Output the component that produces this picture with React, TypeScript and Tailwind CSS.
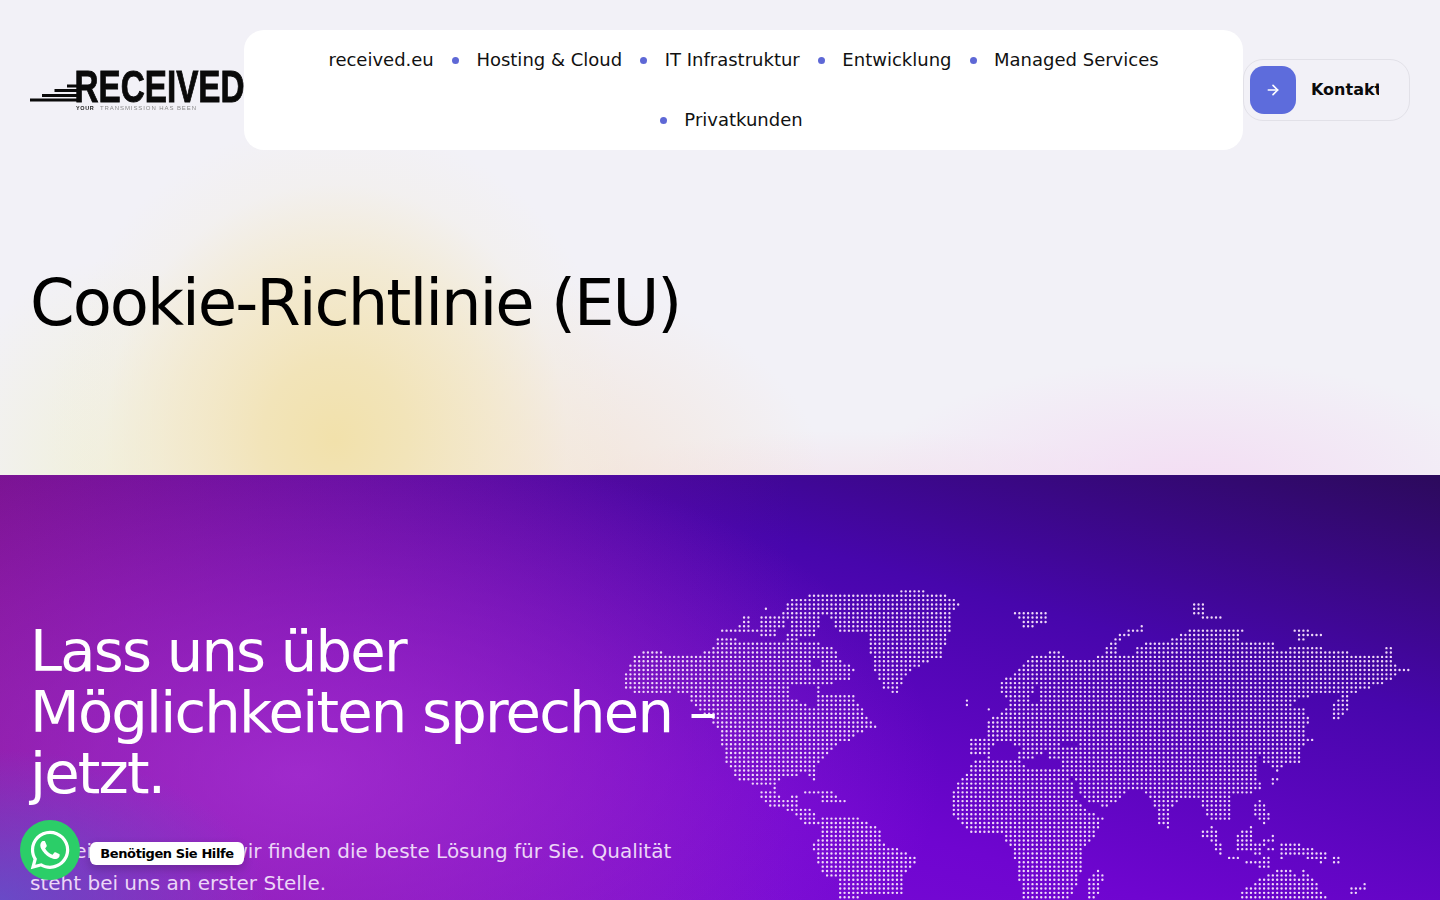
import { ArrowRight } from "lucide-react";
import { FaWhatsapp } from "react-icons/fa";

type Pt = [number, number];
const z4 = (p: number[]): Pt[] => { const o: Pt[] = []; for (let i = 0; i < p.length; i += 2) o.push([610 + p[i] / 3, 580 + p[i + 1] / 3]); return o; };
const z5 = (p: number[]): Pt[] => { const o: Pt[] = []; for (let i = 0; i < p.length; i += 2) o.push([950 + p[i] / 3, 590 + p[i + 1] / 3]); return o; };

const land: Pt[][] = [
  z4([42,285,70,228,110,212,220,226,295,215,320,178,380,172,400,188,520,188,530,172,610,188,670,200,695,240,735,268,718,305,640,312,622,345,730,345,772,410,800,445,742,458,718,482,680,495,650,522,618,560,614,614,595,582,512,590,500,625,462,622,385,598,345,545,330,460,305,420,240,365,240,340,190,335,130,340,110,350,42,325]),
  z4([450,628,500,630,515,660,560,645,565,680,605,690,632,732,585,732,550,695,480,680,450,655]),
  z4([580,632,670,632,680,650,710,665,640,668,625,645,582,642]),
  z4([635,712,738,712,815,750,815,788,915,830,915,850,885,880,880,945,690,955,682,890,640,885,606,800,632,770]),
  z4([610,42,720,42,840,42,895,28,1005,42,1062,70,1022,100,1022,140,998,232,930,255,885,295,865,340,818,328,790,270,778,190,772,165,680,155,660,112,640,100]),
  z4([515,100,540,58,610,42,640,100,620,168,530,168,540,130]),
  z4([398,108,420,108,420,130,398,130]),
  z4([450,108,525,108,525,142,450,142]),
  z4([335,148,400,136,500,150,498,168,335,158]),
  z4([464,84,470,84,470,90,464,90]),
  z5([150,278,205,240,245,197,330,182,345,205,415,212,445,197,555,197,560,172,590,155,650,158,690,133,730,118,882,118,870,155,975,158,982,183,1040,170,1105,172,1170,183,1240,197,1320,197,1345,228,1382,238,1340,256,1300,282,1222,308,1170,310,1040,322,1030,345,1065,355,1080,400,1060,430,1092,448,1060,470,1052,518,1000,530,990,548,950,525,930,500,915,520,935,600,890,612,842,612,848,690,790,700,770,680,740,622,690,622,665,660,660,716,625,700,610,630,570,592,525,605,500,632,470,650,412,640,385,612,370,560,340,540,335,510,295,505,295,480,250,505,205,505,210,470,185,465,180,455,130,465,125,505,60,495,58,448,112,445,112,392,150,368,180,352,168,320,150,300]),
  z5([8,610,32,562,60,535,70,508,200,508,240,538,350,538,382,625,415,665,462,682,435,735,395,775,398,830,360,935,215,935,205,840,178,765,150,728,120,728,60,728,20,690,8,670]),
  z5([190,65,300,58,295,100,238,112,218,112,205,85]),
  z5([730,42,765,38,770,70,818,78,818,88,760,88,730,72]),
  z5([468,165,520,125,578,103,578,122,515,142,500,192,470,192]),
  z5([1033,118,1060,118,1118,130,1118,138,1065,138,1060,155,1040,155]),
  z5([1308,170,1330,170,1330,192,1308,192]),
  z5([1150,345,1175,318,1198,318,1198,362,1172,388,1148,388]),
  z5([965,562,988,562,978,585,966,585]),
  z5([415,870,445,838,462,855,438,928,415,928]),
  z5([912,645,932,628,962,672,948,718,938,695,915,672]),
  z5([755,725,792,708,818,770,818,795,800,785,780,750,755,745]),
  z5([850,745,880,722,905,708,912,778,855,780]),
  z5([915,762,945,748,972,735,972,752,940,770,938,795,915,795]),
  z5([825,798,868,798,868,808,825,808]),
  z5([885,815,960,798,962,832,925,832]),
  z5([955,772,975,772,975,782,955,782]),
  z5([990,762,1040,762,1132,788,1118,832,1098,815,1040,792,1012,790,1005,808,990,808]),
  z5([1148,798,1172,798,1172,822,1148,822]),
  z5([872,905,930,865,990,835,1028,838,1040,870,1060,842,1085,860,1135,928,872,935]),
  z5([1200,895,1250,878,1250,897,1215,915,1200,915]),
  z5([47,328,54,328,54,350,47,350]),
  z5([113,352,120,352,120,362,113,362]),
];
const holes: Pt[][] = [
  z4([535,312,620,312,622,345,625,385,580,370,545,350]),
  z4([600,232,630,232,630,258,600,258]),
  z5([250,292,266,285,268,335,245,335]),
  z5([370,575,385,575,395,630,380,630]),
  z5([150,465,185,465,190,500,150,500]),
  z5([332,452,392,450,388,470,340,470]),
];
function inside(p: Pt, poly: Pt[]) {
  let c = false;
  for (let i = 0, j = poly.length - 1; i < poly.length; j = i++) {
    const [xi, yi] = poly[i], [xj, yj] = poly[j];
    if (yi > p[1] !== yj > p[1] && p[0] < ((xj - xi) * (p[1] - yi)) / (yj - yi) + xi) c = !c;
  }
  return c;
}
const dots = (() => {
  const step = 4.37;
  let d = "";
  for (let r = 0; r < 80; r++) {
    for (let c = 0; c < 190; c++) {
      const x = 1408.3 - c * step, y = 670 + (r - 19) * step;
      const p: Pt = [x, y];
      if (land.some((l) => inside(p, l)) && !holes.some((h) => inside(p, h))) {
        d += `M${(x - 1.2).toFixed(2)} ${y.toFixed(2)}a1.2 1.2 0 1 0 2.4 0a1.2 1.2 0 1 0 -2.4 0`;
      }
    }
  }
  return d;
})();

const nav = ["received.eu", "Hosting & Cloud", "IT Infrastruktur", "Entwicklung", "Managed Services", "Privatkunden"];

export default function App() {
  return (
    <div className="relative h-[900px] overflow-hidden font-['DejaVu_Sans',sans-serif] text-black">
      <section className="h-[475px] bg-[radial-gradient(ellipse_290px_320px_at_335px_440px,#f2e1ab_0%,#f2e4b9_25%,rgba(243,232,200,0.75)_55%,rgba(243,238,225,0.35)_80%,rgba(243,241,246,0)_100%),radial-gradient(ellipse_300px_220px_at_530px_500px,rgba(245,218,190,0.6)_0%,rgba(243,241,246,0)_100%),radial-gradient(ellipse_170px_220px_at_110px_480px,rgba(240,240,205,0.7)_0%,rgba(243,241,246,0)_100%),radial-gradient(ellipse_330px_130px_at_1190px_490px,#f3dcf3_0%,rgba(243,241,246,0)_100%),radial-gradient(ellipse_300px_60px_at_860px_490px,rgba(243,225,235,0.8)_0%,rgba(243,241,246,0)_100%),linear-gradient(#f2f1f7,#f2f1f7)]">
        <header className="flex items-center px-[30px] pt-[30px]">
          <div className="w-[214px] shrink-0">
            <svg viewBox="0 0 214 44" className="block h-[44px] w-[214px] blur-[0.3px]">
              <text x="44.5" y="34" textLength="170" lengthAdjust="spacingAndGlyphs" fontFamily="'Liberation Sans', sans-serif" fontWeight="700" fontSize="44.5" fill="#0a0a0a" stroke="#0a0a0a" strokeWidth="0.9">RECEIVED</text>
              <rect x="0" y="30.5" width="50" height="3" fill="#0a0a0a" />
              <rect x="12" y="26" width="38" height="3" fill="#0a0a0a" />
              <rect x="24.5" y="21" width="26" height="3" fill="#0a0a0a" />
              <rect x="37" y="16.5" width="14" height="3" fill="#0a0a0a" />
              <text x="46" y="41.5" fontFamily="'Liberation Sans', sans-serif" fontSize="5.5" fontWeight="700" letterSpacing="0.6" fill="#222">YOUR</text>
              <text x="70" y="41.5" textLength="96" fontFamily="'Liberation Sans', sans-serif" fontSize="6" fill="#8a8a8a">TRANSMISSION HAS BEEN</text>
            </svg>
          </div>
          <nav className="flex h-[120px] w-[999px] shrink-0 flex-wrap content-start justify-center rounded-[20px] bg-white px-[60px]">
            {nav.map((n, i) => (
              <a key={n} className="relative px-[21.3px] text-[18px] leading-[60px] text-[#111]">
                {i > 0 && <span className="absolute left-[-3px] top-[26.5px] h-[7px] w-[7px] rounded-full bg-[#5e68d6]" />}
                {n}
              </a>
            ))}
          </nav>
          <button className="flex h-[62px] w-[167px] shrink-0 items-center rounded-[20px] border border-[#e2e1e8] pl-[6px]">
            <span className="flex h-[48px] w-[46px] items-center justify-center rounded-[14px] bg-[#5d6cdc] text-white">
              <ArrowRight size={16} strokeWidth={2.5} />
            </span>
            <span className="ml-[15px] w-[68px] overflow-hidden whitespace-nowrap text-left text-[16px] font-bold text-[#0b0b0b]">Kontakt</span>
          </button>
        </header>
        <h1 className="pl-[30px] pt-[114px] text-[64px] font-normal leading-[78px] tracking-[-2px] text-black">Cookie-Richtlinie (EU)</h1>
      </section>
      <section className="relative h-[425px] overflow-hidden bg-[radial-gradient(ellipse_270px_150px_at_0px_425px,rgba(95,85,205,0.8)_0%,rgba(95,85,205,0)_100%),radial-gradient(ellipse_640px_340px_at_300px_300px,rgba(172,52,215,0.72)_0%,rgba(172,52,215,0)_100%),linear-gradient(90deg,rgba(135,25,130,0.72)_0%,rgba(135,25,130,0)_55%),linear-gradient(195deg,#2c0a5c_0%,#4706ac_30%,#6f05d0_62%,#8410dc_100%)]">
        <svg className="pointer-events-none absolute left-0 top-0 h-[425px] w-[1440px]" viewBox="0 475 1440 425">
          <path d={dots} fill="#f0d9f8" />
        </svg>
        <div className="relative px-[30px] pt-[146px]">
          <h2 className="w-[700px] text-[57.6px] font-normal leading-[61px] tracking-[-1.8px] text-white">Lass uns über Möglichkeiten sprechen – jetzt.</h2>
          <p className="mt-[31px] w-[680px] text-[20px] leading-[32px] text-[#ecd6f7]">Schreiben Sie uns – wir finden die beste Lösung für Sie. Qualität steht bei uns an erster Stelle.</p>
        </div>
      </section>
      <div className="absolute left-[20px] top-[820px] flex h-[60px] w-[60px] items-center justify-center rounded-full bg-[#2bce68] text-white">
        <FaWhatsapp size={44} />
      </div>
      <div className="absolute left-[90px] top-[842px] flex h-[23px] w-[154px] items-center justify-center rounded-[6px] bg-white text-[13px] font-bold tracking-[-0.4px] text-black shadow-[0_4px_10px_rgba(0,0,0,0.2)]">Benötigen Sie Hilfe</div>
    </div>
  );
}
